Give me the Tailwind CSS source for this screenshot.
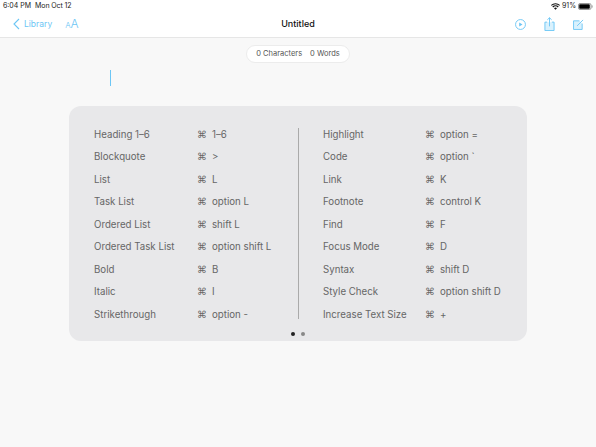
<!DOCTYPE html>
<html lang="en">
<head>
    <meta charset="UTF-8">
    <title>Untitled</title>
    <script src="https://cdn.jsdelivr.net/npm/@tailwindcss/browser@4"></script>
</head>
<body class="w-[596px] h-[447px] overflow-hidden bg-[#f8f8f8] font-['Inter','Liberation_Sans',sans-serif]">
    <header class="h-[38px] bg-white border-b border-[#e6e6e6] flex flex-col">
        <div class="h-[11px] px-[3px] pt-[1px] flex justify-between items-center text-[7px] leading-[10px] text-[#222]">
            <div class="flex gap-[4px]"><span>6:04 PM</span><span class="tracking-[-0.1px]">Mon Oct 12</span></div>
            <div class="flex items-center gap-[2px]">
                <svg width="9" height="7" viewBox="0 0 9 7"><path d="M4.5 6.8 3 5.2a2.2 2.2 0 0 1 3 0ZM2.2 4.4 1.3 3.5a4.6 4.6 0 0 1 6.4 0l-.9.9a3.3 3.3 0 0 0-4.6 0ZM.6 2.8 0 2a6.5 6.5 0 0 1 9 0l-.6.8a5.6 5.6 0 0 0-7.8 0Z" fill="#111"/></svg>
                <span>91%</span>
                <svg width="15" height="7" viewBox="0 0 15 7"><rect x=".5" y=".5" width="12.5" height="6" rx="1.5" fill="none" stroke="#999"/><rect x="1.2" y="1.2" width="10.6" height="4.6" rx=".8" fill="#000"/><rect x="13.6" y="2.4" width="1" height="2.2" fill="#999"/></svg>
            </div>
        </div>
        <div class="flex-1 relative flex items-center justify-between text-[#6cc6f5]">
            <div class="flex items-center pl-[13px]">
                <svg width="7" height="12" viewBox="0 0 7 12" fill="none" stroke="#6cc6f5" stroke-width="1.1"><path d="M6 1 1 6l5 5"/></svg>
                <span class="ml-[4px] text-[8.5px]">Library</span>
                <span class="ml-[13px] flex items-baseline leading-none font-light"><span class="text-[8px]">A</span><span class="text-[12px]">A</span></span>
            </div>
            <div class="absolute inset-x-0 text-center text-[9px] font-medium text-[#111]">Untitled</div>
            <div class="flex items-center gap-[18px] pr-[12px]">
                <svg width="11" height="11" viewBox="0 0 12 12" fill="none" stroke="#6cc6f5"><circle cx="6" cy="6" r="5.4"/><path d="M4.6 3.8v4.4L8.2 6Z" fill="#6cc6f5" stroke="none"/></svg>
                <svg width="11" height="14" viewBox="0 0 11 15" fill="#d9f1fd" stroke="#6cc6f5"><path d="M3 5.5H.6v9h9.8v-9H8"/><path d="M5.5 10V.8M3.2 3 5.5.8 7.8 3" fill="none"/></svg>
                <svg width="11" height="11" viewBox="0 0 12 12" fill="#d9f1fd" stroke="#6cc6f5"><path d="M7 2H.6v9.4H10V5"/><path d="M4.5 7.5 11 1" fill="none"/></svg>
            </div>
        </div>
    </header>

    <main class="flex flex-col items-center">
        <div class="mt-[7px] w-[104px] h-[18px] rounded-full bg-white border border-[#ececec] flex items-center justify-center gap-[8px] text-[7.5px] text-[#555]">
            <span>0 Characters</span><span>0 Words</span>
        </div>
        <div class="self-start ml-[110px] mt-[7px] w-[1px] h-[16px] bg-[#6cc6f5]"></div>

        <section class="mt-[20px] w-[458px] h-[235px] rounded-[12px] bg-[#e8e8ea] pt-[22px] text-[9.7px] text-[#666]">
            <div class="grid grid-cols-[230px_1fr]">
                <div class="pl-[25px] border-r border-[#aaa] h-[191px]">
                    <div class="mt-[0.5px] h-[193px] flex flex-col justify-between">
                        <div class="flex items-center h-[13px]"><span class="w-[103px]">Heading 1–6</span><span class="w-[15px] font-['DejaVu_Sans']">⌘</span><span>1–6</span></div>
                        <div class="flex items-center h-[13px]"><span class="w-[103px]">Blockquote</span><span class="w-[15px] font-['DejaVu_Sans']">⌘</span><span>&gt;</span></div>
                        <div class="flex items-center h-[13px]"><span class="w-[103px]">List</span><span class="w-[15px] font-['DejaVu_Sans']">⌘</span><span>L</span></div>
                        <div class="flex items-center h-[13px]"><span class="w-[103px]">Task List</span><span class="w-[15px] font-['DejaVu_Sans']">⌘</span><span>option L</span></div>
                        <div class="flex items-center h-[13px]"><span class="w-[103px]">Ordered List</span><span class="w-[15px] font-['DejaVu_Sans']">⌘</span><span>shift L</span></div>
                        <div class="flex items-center h-[13px]"><span class="w-[103px]">Ordered Task List</span><span class="w-[15px] font-['DejaVu_Sans']">⌘</span><span>option shift L</span></div>
                        <div class="flex items-center h-[13px]"><span class="w-[103px]">Bold</span><span class="w-[15px] font-['DejaVu_Sans']">⌘</span><span>B</span></div>
                        <div class="flex items-center h-[13px]"><span class="w-[103px]">Italic</span><span class="w-[15px] font-['DejaVu_Sans']">⌘</span><span>I</span></div>
                        <div class="flex items-center h-[13px]"><span class="w-[103px]">Strikethrough</span><span class="w-[15px] font-['DejaVu_Sans']">⌘</span><span>option -</span></div>
                    </div>
                </div>
                <div class="pl-[24px] mt-[0.5px] h-[193px] flex flex-col justify-between">
                    <div class="flex items-center h-[13px]"><span class="w-[102px]">Highlight</span><span class="w-[15px] font-['DejaVu_Sans']">⌘</span><span>option =</span></div>
                    <div class="flex items-center h-[13px]"><span class="w-[102px]">Code</span><span class="w-[15px] font-['DejaVu_Sans']">⌘</span><span>option `</span></div>
                    <div class="flex items-center h-[13px]"><span class="w-[102px]">Link</span><span class="w-[15px] font-['DejaVu_Sans']">⌘</span><span>K</span></div>
                    <div class="flex items-center h-[13px]"><span class="w-[102px]">Footnote</span><span class="w-[15px] font-['DejaVu_Sans']">⌘</span><span>control K</span></div>
                    <div class="flex items-center h-[13px]"><span class="w-[102px]">Find</span><span class="w-[15px] font-['DejaVu_Sans']">⌘</span><span>F</span></div>
                    <div class="flex items-center h-[13px]"><span class="w-[102px]">Focus Mode</span><span class="w-[15px] font-['DejaVu_Sans']">⌘</span><span>D</span></div>
                    <div class="flex items-center h-[13px]"><span class="w-[102px]">Syntax</span><span class="w-[15px] font-['DejaVu_Sans']">⌘</span><span>shift D</span></div>
                    <div class="flex items-center h-[13px]"><span class="w-[102px]">Style Check</span><span class="w-[15px] font-['DejaVu_Sans']">⌘</span><span>option shift D</span></div>
                    <div class="flex items-center h-[13px]"><span class="w-[102px]">Increase Text Size</span><span class="w-[15px] font-['DejaVu_Sans']">⌘</span><span>+</span></div>
                </div>
            </div>
            <div class="flex justify-center gap-[6px] pt-[10px]">
                <span class="w-[4px] h-[4px] rounded-full bg-[#222]"></span>
                <span class="w-[4px] h-[4px] rounded-full bg-[#888]"></span>
            </div>
        </section>
    </main>
</body>
</html>
